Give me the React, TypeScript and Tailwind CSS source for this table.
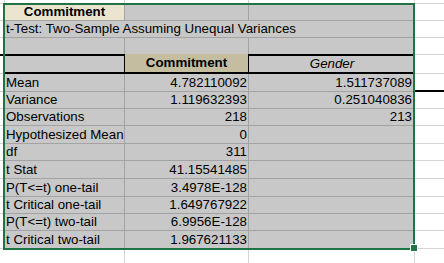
import React from "react";

type DataRow = { label: string; b: string; c: string; h: string; dBlack?: boolean };

const rows: DataRow[] = [
  { label: "Mean", b: "4.782110092", c: "1.511737089", h: "h-[18px]", dBlack: true },
  { label: "Variance", b: "1.119632393", c: "0.251040836", h: "h-[17px]" },
  { label: "Observations", b: "218", c: "213", h: "h-[17px]" },
  { label: "Hypothesized Mean", b: "0", c: "", h: "h-[18px]" },
  { label: "df", b: "311", c: "", h: "h-[17px]" },
  { label: "t Stat", b: "41.15541485", c: "", h: "h-[18px]" },
  { label: "P(T<=t) one-tail", b: "3.4978E-128", c: "", h: "h-[18px]" },
  { label: "t Critical one-tail", b: "1.649767922", c: "", h: "h-[17px]" },
  { label: "P(T<=t) two-tail", b: "6.9956E-128", c: "", h: "h-[17px]" },
  { label: "t Critical two-tail", b: "1.967621133", c: "", h: "h-[18px]" },
];

const stub = "w-[5px] shrink-0 border-r border-b border-[#d4d4d4] bg-white";
const gd = "border-r border-b border-[#a3a3a3] bg-[#c8c8c8]";
const colD = "flex-1 border-b border-[#d4d4d4] bg-white";

export default function App() {
  return (
    <div className="relative w-[444px] h-[263px] overflow-hidden bg-white font-['Liberation_Sans',Arial,sans-serif] text-[13.3px] leading-none text-black">
      <div className="flex flex-col w-full h-full">
        {/* partial top row */}
        <div className="flex h-[4px]">
          <div className={stub} />
          <div className="w-[120px] shrink-0 border-r border-b border-[#d4d4d4]" />
          <div className="w-[124px] shrink-0 border-r border-b border-[#d4d4d4]" />
          <div className="w-[166px] shrink-0 border-r border-b border-[#d4d4d4]" />
          <div className={colD} />
        </div>
        {/* row 1 */}
        <div className="flex h-[17px]">
          <div className={stub} />
          <div className="w-[120px] shrink-0 border-r border-b border-[#a3a3a3] bg-[#ebe5cf] flex items-center justify-center font-bold">
            Commitment
          </div>
          <div className={`w-[124px] shrink-0 ${gd}`} />
          <div className={`w-[166px] shrink-0 ${gd}`} />
          <div className={colD} />
        </div>
        {/* row 2 */}
        <div className="flex h-[17px]">
          <div className={stub} />
          <div className={`w-[410px] shrink-0 ${gd} flex items-center pl-[1px] whitespace-nowrap`}>
            t-Test: Two-Sample Assuming Unequal Variances
          </div>
          <div className={colD} />
        </div>
        {/* row 3 */}
        <div className="flex h-[16px]">
          <div className="w-[5px] shrink-0 border-r border-[#d4d4d4] bg-white" />
          <div className="w-[120px] shrink-0 border-r border-[#a3a3a3] bg-[#c8c8c8]" />
          <div className="w-[124px] shrink-0 border-r border-[#a3a3a3] bg-[#c8c8c8]" />
          <div className="w-[166px] shrink-0 border-r border-[#a3a3a3] bg-[#c8c8c8]" />
          <div className="flex-1 bg-white" />
        </div>
        {/* header row */}
        <div className="flex h-[20px]">
          <div className="w-[5px] shrink-0 border-t-2 border-b border-t-black border-b-[#d4d4d4] bg-white" />
          <div className="w-[120px] shrink-0 border-t-2 border-b-2 border-r border-black bg-[#c8c8c8]" />
          <div className="w-[124px] shrink-0 border-b-2 border-r border-black bg-[#c4bda0] flex items-center justify-center font-bold">
            Commitment
          </div>
          <div className="w-[166px] shrink-0 border-t-2 border-b-2 border-black bg-[#c8c8c8] flex items-center justify-center italic">
            Gender
          </div>
          <div className="flex-1 border-t border-b border-[#d4d4d4] bg-white" />
        </div>
        {/* data rows */}
        {rows.map((r) => (
          <div key={r.label} className={`flex ${r.h}`}>
            <div className={stub} />
            <div className={`w-[120px] shrink-0 ${gd} flex items-center pl-[1px] whitespace-nowrap`}>
              {r.label}
            </div>
            <div className={`w-[124px] shrink-0 ${gd} flex items-center justify-end pr-[1px]`}>
              {r.b}
            </div>
            <div className={`w-[166px] shrink-0 ${gd} flex items-center justify-end pr-[2px]`}>
              {r.c}
            </div>
            {r.dBlack ? (
              <div className="flex-1 border-b-2 border-black bg-white" />
            ) : (
              <div className={colD} />
            )}
          </div>
        ))}
        {/* below */}
        <div className="flex flex-1">
          <div className="w-[5px] shrink-0 bg-white" />
          <div className="w-[120px] shrink-0 border-r border-[#d4d4d4]" />
          <div className="w-[124px] shrink-0 border-r border-[#d4d4d4]" />
          <div className="w-[166px] shrink-0 border-r border-[#d4d4d4]" />
          <div className="flex-1" />
        </div>
      </div>
      {/* selection border */}
      <div className="absolute left-[3px] top-[3px] w-[412px] h-[247px] border-2 border-[#217346] pointer-events-none" />
      {/* fill handle */}
      <div className="absolute left-[410px] top-[244px] w-[8px] h-[8px] border border-white bg-[#217346]" />
    </div>
  );
}
